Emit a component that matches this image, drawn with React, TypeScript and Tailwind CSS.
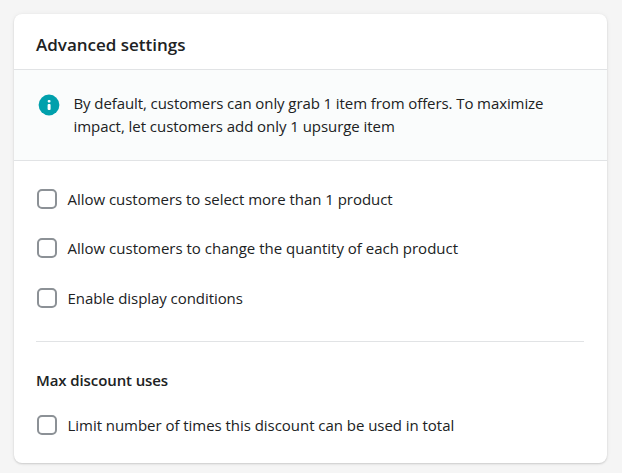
type CheckRowProps = { label: string; tracking: string };

const CheckRow = ({ label, tracking }: CheckRowProps) => (
  <label className="flex h-5 items-center gap-[10.5px]">
    <input
      type="checkbox"
      className="size-5 shrink-0 appearance-none rounded-[5px] border-2 border-[#8c9196] bg-white"
    />
    <span className={`whitespace-nowrap leading-5 ${tracking}`}>{label}</span>
  </label>
);

const InfoIcon = () => (
  <svg viewBox="0 0 22 22" className="mt-[2px] size-[22px] shrink-0">
    <circle cx="11" cy="11" r="10.4" fill="#00a0ac" />
    <rect x="9.7" y="6" width="2.8" height="2.5" rx="1" fill="white" />
    <rect x="9.6" y="10" width="3" height="6" rx="1" fill="white" />
  </svg>
);

export default function App() {
  return (
    <main className="h-[473px] bg-[#f5f5f5] pt-[14px] pr-[15px] pl-[14px] font-['Open_Sans',sans-serif] text-[15px] text-[#202223]">
      <section className="h-[449px] overflow-hidden rounded-lg bg-white shadow-[0_0_5px_rgba(23,24,24,0.05),0_1px_2px_rgba(0,0,0,0.15)]">
        <h2 className="h-[55px] px-[22px] pt-[17px] text-[17px] leading-7 font-semibold">Advanced settings</h2>
        <div className="flex h-[92px] gap-[13.5px] border-y border-[#e1e3e5] bg-[#fafcfc] pt-[22px] pl-6">
          <InfoIcon />
          <p className="leading-[23px] whitespace-nowrap">
            <span className="block tracking-[-0.09px]">By default, customers can only grab 1 item from offers. To maximize</span>
            <span className="block tracking-[-0.05px]">impact, let customers add only 1 upsurge item</span>
          </p>
        </div>
        <div className="px-[23px] pt-7">
          <div className="flex flex-col">
            <CheckRow label="Allow customers to select more than 1 product" tracking="tracking-[-0.03px]" />
            <div className="pt-[29px] pb-[30px]">
              <CheckRow label="Allow customers to change the quantity of each product" tracking="tracking-[0px]" />
            </div>
            <CheckRow label="Enable display conditions" tracking="tracking-[-0.06px]" />
          </div>
          <hr className="-ml-px mt-[33px] border-[#e1e3e5]" />
          <h3 className="-ml-px mt-7 mb-[25px] h-5 leading-5 font-semibold tracking-[-0.1px]">Max discount uses</h3>
          <CheckRow label="Limit number of times this discount can be used in total" tracking="tracking-[-0.04px]" />
        </div>
      </section>
    </main>
  );
}
